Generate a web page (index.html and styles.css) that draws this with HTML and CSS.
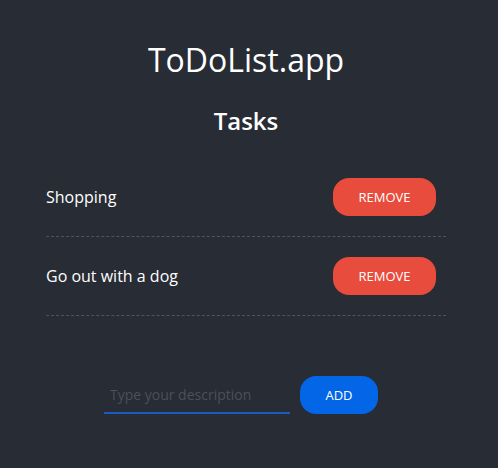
FILE: index.html
```html
<!DOCTYPE html>
<html lang="en">
<head>
<meta charset="utf-8">
<title>ToDoList.app</title>
<link rel="stylesheet" href="styles.css">
</head>
<body>
<div class="app">
  <h1 class="title">ToDoList.app</h1>
  <h2 class="subtitle">Tasks</h2>
  <ul class="tasks">
    <li class="task"><span class="task-text">Shopping</span><button class="btn btn-remove">REMOVE</button></li>
    <li class="task"><span class="task-text">Go out with a dog</span><button class="btn btn-remove">REMOVE</button></li>
  </ul>
  <form class="add-form">
    <input class="add-input" type="text" placeholder="Type your description">
    <button class="btn btn-add" type="button">ADD</button>
  </form>
</div>
</body>
</html>
```

FILE: styles.css
```css
html, body {
  margin: 0;
  background: #282c34;
}
body {
  padding: 0 6px 0 0;
  font-family: "Open Sans", "DejaVu Sans", sans-serif;
  color: #ffffff;
  height: 468px;
  box-sizing: border-box;
}
.app {
  width: 400px;
  margin: 0 auto;
  padding-top: 38px;
}
.title {
  margin: 0;
  font-size: 32px;
  font-weight: 400;
  line-height: 44px;
  text-align: center;
}
.subtitle {
  margin: 22px 0 0;
  font-size: 24px;
  font-weight: 600;
  line-height: 33px;
  text-align: center;
}
.tasks {
  list-style: none;
  margin: 21px 0 0;
  padding: 0;
}
.task {
  display: flex;
  align-items: center;
  justify-content: space-between;
  padding: 20px 10px 20px 0;
  border-bottom: 1px dashed #50555d;
}
.task-text {
  font-size: 16px;
  line-height: 22px;
}
.btn {
  border: none;
  color: #ffffff;
  font-family: "Open Sans", "DejaVu Sans", sans-serif;
  font-size: 13px;
  line-height: 18px;
  padding: 10px 25.5px;
  border-radius: 16px;
  cursor: pointer;
}
.btn-remove {
  background: #e74c3c;
}
.btn-add {
  background: #0366e6;
}
.add-form {
  display: flex;
  justify-content: center;
  align-items: flex-end;
  gap: 10px;
  padding-right: 10px;
  margin-top: 60px;
}
.add-input {
  width: 186px;
  height: 38px;
  box-sizing: border-box;
  background: transparent;
  border: none;
  border-bottom: 2px solid #1b5cbf;
  padding: 0 6px;
  color: #ffffff;
  font-family: "Open Sans", "DejaVu Sans", sans-serif;
  font-size: 14px;
  outline: none;
}
.add-input::placeholder {
  color: #4b5059;
}
```
